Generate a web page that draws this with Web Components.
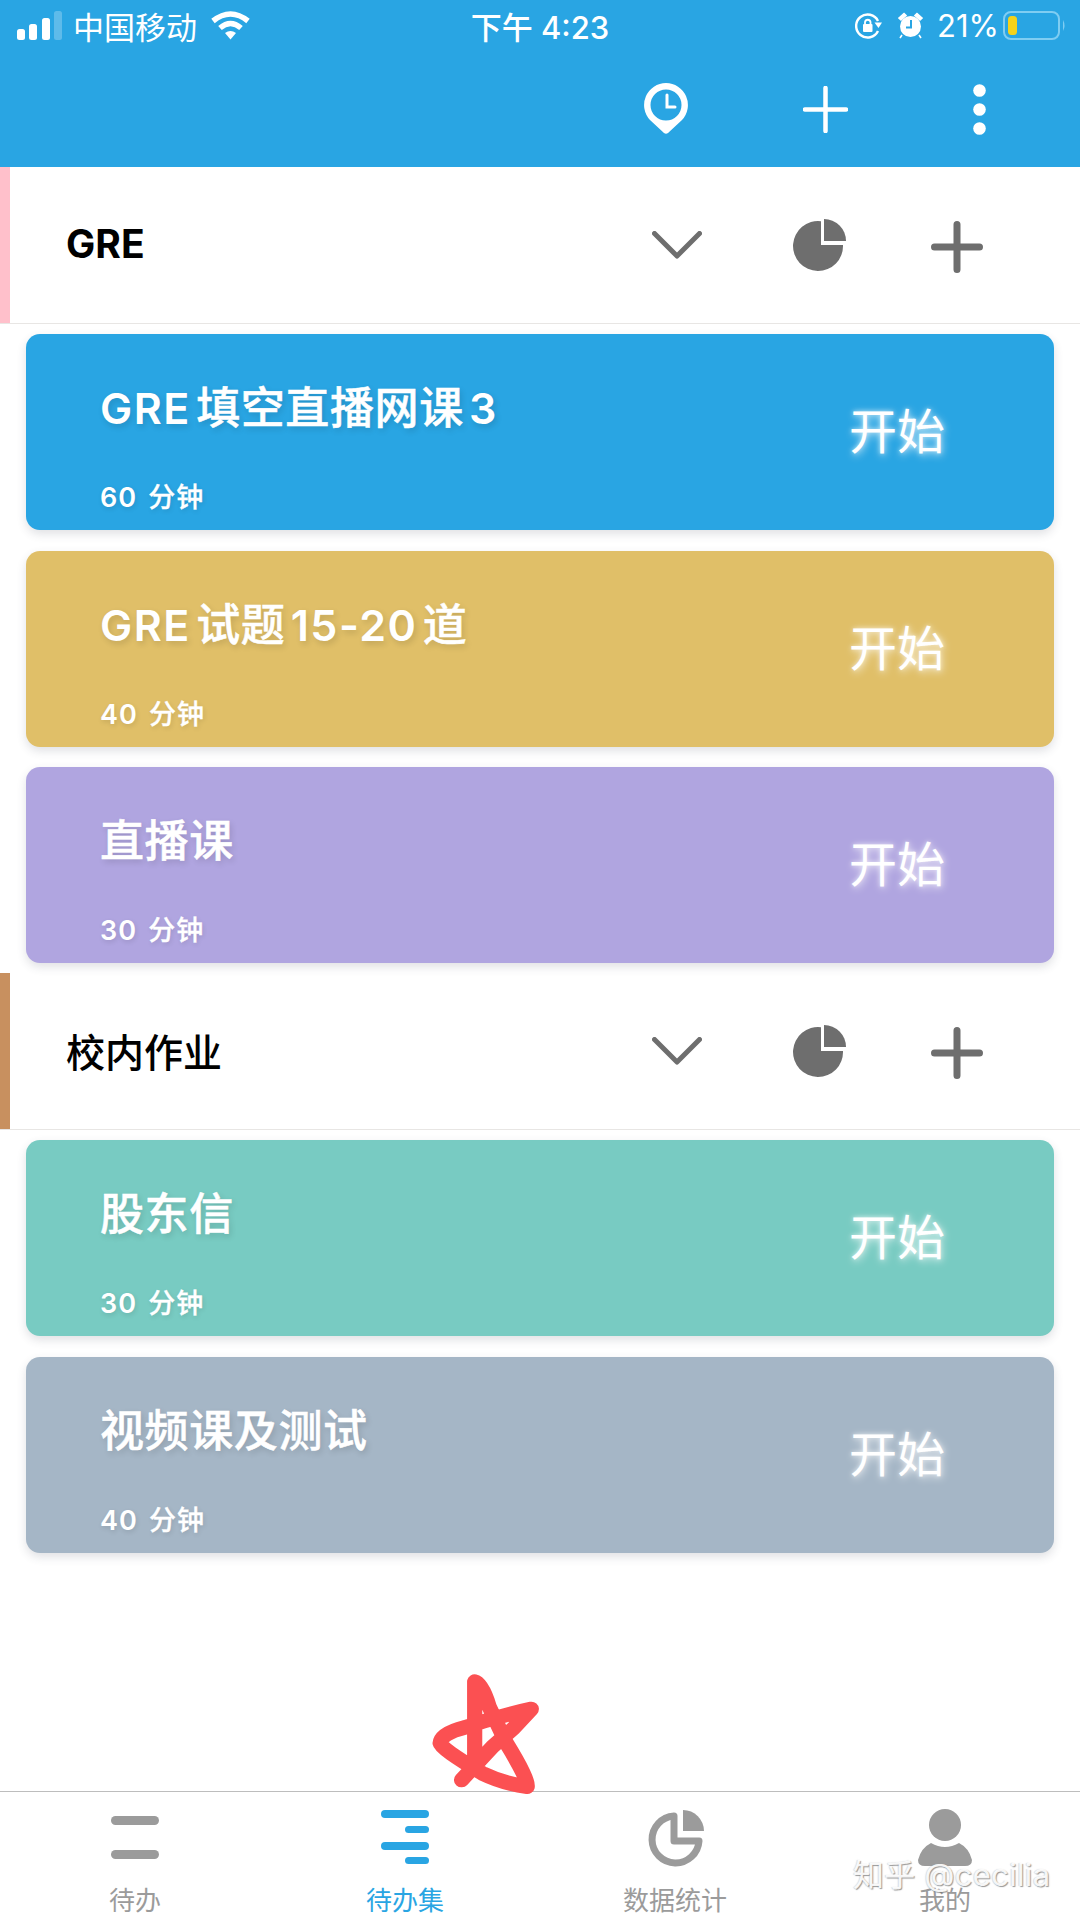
<!DOCTYPE html>
<html lang="zh-CN">
<head>
<meta charset="utf-8">
<title>待办集</title>
<style>
  html, body { margin: 0; padding: 0; background: #fff; }
  body { font-family: Inter, "Noto Sans CJK SC", sans-serif; }
</style>
</head>
<body>
<todo-screen>
  <app-header></app-header>
  <todo-group name="GRE" color="#ffc0cb">
    <todo-card name="GRE 填空直播网课 3" minutes="60 分钟" color="#29a5e3"></todo-card>
    <todo-card name="GRE 试题 15-20 道" minutes="40 分钟" color="#e0bf68"></todo-card>
    <todo-card name="直播课" minutes="30 分钟" color="#b0a5e0"></todo-card>
  </todo-group>
  <todo-group name="校内作业" color="#c8905f">
    <todo-card name="股东信" minutes="30 分钟" color="#78cbc2"></todo-card>
    <todo-card name="视频课及测试" minutes="40 分钟" color="#a5b6c6"></todo-card>
  </todo-group>
  <tab-bar slot="tabs">
    <tab-item icon="todo" label="待办"></tab-item>
    <tab-item icon="set" label="待办集" active></tab-item>
    <tab-item icon="stats" label="数据统计"></tab-item>
    <tab-item icon="me" label="我的"></tab-item>
  </tab-bar>
</todo-screen>

<script>
const BLUE = '#29a5e3'

// latin runs are heavier than the chinese ones in the reference
const boldLatin = text => text.replace(/[\x21-\x7e]+/g, run => `<b>${run}</b>`)

const ICONS = {
  signal: `<svg width="45" height="29" viewBox="0 0 45 29" fill="#fff">
      <rect x="0" y="18" width="8" height="11" rx="2.5"/>
      <rect x="12" y="13" width="8" height="16" rx="2.5"/>
      <rect x="25" y="7" width="8" height="22" rx="2.5"/>
      <rect x="37" y="0" width="8" height="29" rx="2.5" opacity=".25"/>
    </svg>`,
  wifi: `<svg width="39" height="29" viewBox="0 0 39 29" fill="none" stroke="#fff" stroke-width="5.5">
      <path d="M2 10 Q19.5 -4 37 10"/>
      <path d="M9 17 Q19.5 8 30 17"/>
      <path d="M14 22 Q19.5 18 25 22 L19.5 28.5 Z" fill="#fff" stroke="none"/>
    </svg>`,
  rotate: `<svg width="27" height="26" viewBox="0 0 27 26" fill="none" stroke="#fff" stroke-width="2.4">
      <path d="M23 18 A11.5 11.5 0 1 1 23 8"/>
      <path d="M19.5 9.5 L27 9.5 L23.5 15 Z" fill="#fff" stroke="none"/>
      <rect x="8" y="11" width="9.5" height="8" rx="1" fill="#fff" stroke="none"/>
      <path d="M10 11 V9 A2.8 2.8 0 0 1 15.5 9 V11" stroke-width="1.8"/>
    </svg>`,
  alarm: `<svg width="25" height="27" viewBox="0 0 25 27" fill="#fff">
      <circle cx="12.5" cy="14.5" r="10.5"/>
      <path d="M1 6 L6 1.5 L8 3.5 L3 8 Z M24 6 L19 1.5 L17 3.5 L22 8 Z M4 23 L2 26 M21 23 L23 26" stroke="#fff" stroke-width="1.6"/>
      <path d="M13 8 V15.5 H8" fill="none" stroke="${BLUE}" stroke-width="2"/>
    </svg>`,
  battery: `<svg width="63" height="29" viewBox="0 0 63 29">
      <rect x="1" y="1" width="55" height="27" rx="7" fill="none" stroke="#7fcdf2" stroke-width="2"/>
      <rect x="5" y="5" width="9" height="19" rx="3.5" fill="#f5d21a"/>
      <path d="M60 9 Q63 14.5 60 20 Z" fill="#7fcdf2"/>
    </svg>`,
  pin: `<svg width="44" height="51" viewBox="0 0 44 51">
      <path fill="#fff" fill-rule="evenodd" d="M22 0 A22 22 0 0 1 38 37 L24 50 Q22 51.5 20 50 L6 37 A22 22 0 0 1 22 0 Z M22 6.5 A15.5 15.5 0 1 0 22 37.5 A15.5 15.5 0 1 0 22 6.5 Z"/>
      <path fill="none" stroke="#fff" stroke-width="3" stroke-linecap="round" d="M23 12 V24 H31"/>
    </svg>`,
  plusLight: `<svg width="45" height="47" viewBox="0 0 45 47" stroke="#fff" stroke-width="4.5" stroke-linecap="round">
      <path d="M22.5 2 V45 M2 23.5 H43"/>
    </svg>`,
  dots: `<svg width="13" height="51" viewBox="0 0 13 51" fill="#fff">
      <circle cx="6.5" cy="6.5" r="6.3"/><circle cx="6.5" cy="25.5" r="6.3"/><circle cx="6.5" cy="44.5" r="6.3"/>
    </svg>`,
  chevron: `<svg width="50" height="28" viewBox="0 0 50 28" fill="none" stroke="#6e6e6e" stroke-width="5" stroke-linecap="round" stroke-linejoin="round">
      <path d="M2.5 2.5 L25 25 L47.5 2.5"/>
    </svg>`,
  pie: `<svg width="53" height="53" viewBox="0 0 53 53" fill="#6e6e6e">
      <path d="M28 2.2 V26 H50 A25 25 0 1 1 28 2.2 Z"/>
      <path d="M31 0 A22 22 0 0 1 53 22 H31 Z"/>
    </svg>`,
  plusDark: `<svg width="52" height="52" viewBox="0 0 52 52" stroke="#6e6e6e" stroke-width="7" stroke-linecap="round">
      <path d="M26 3.5 V48.5 M3.5 26 H48.5"/>
    </svg>`,
  todo: `<svg width="48" height="60" viewBox="0 0 48 60" fill="currentColor">
      <rect y="8" width="48" height="9" rx="4.5"/><rect y="42" width="48" height="9" rx="4.5"/>
    </svg>`,
  set: `<svg width="48" height="60" viewBox="0 0 48 60" fill="currentColor">
      <rect y="2" width="48" height="8" rx="4"/><rect x="24" y="18" width="24" height="7" rx="3.5"/>
      <rect y="34" width="48" height="8" rx="4"/><rect x="24" y="49" width="24" height="7" rx="3.5"/>
    </svg>`,
  stats: `<svg width="57" height="60" viewBox="0 0 57 60" fill="none" stroke="currentColor" stroke-width="7" stroke-linejoin="round">
      <path d="M27 8 A23.5 23.5 0 1 0 52 33 H27 Z"/>
      <path d="M36 2 A21 21 0 0 1 57 23 H36 Z" fill="currentColor" stroke="none"/>
    </svg>`,
  me: `<svg width="54" height="60" viewBox="0 0 54 60" fill="currentColor">
      <circle cx="27" cy="17" r="16"/>
      <path d="M13 35 Q27 43 41 35 Q51 40 54 52 Q54 58 47 58 H7 Q0 58 0 52 Q3 40 13 35 Z"/>
    </svg>`
}

class TodoScreen extends HTMLElement {
  connectedCallback () {
    this.attachShadow({ mode: 'open' })
    this.shadowRoot.innerHTML = `
      <style>
        :host { display: flex; flex-direction: column; position: relative; width: 1080px; height: 1920px; overflow: hidden; background: #fff; }
        .main { flex: 1; display: block; }
        .star { position: absolute; left: 427px; top: 1670px; }
        .mark {
          position: absolute; left: 853px; top: 1855px;
          font-size: 31px; line-height: 40px; letter-spacing: .3px; white-space: nowrap;
          color: rgba(255,255,255,.92);
          text-shadow: 1px 1px 1px rgba(110,110,110,.7), -1px 0 1px rgba(170,170,170,.4);
        }
      </style>
      <div class="main"><slot></slot></div>
      <slot name="tabs"></slot>
      <svg class="star" width="114" height="130" viewBox="1240 90 330 390" preserveAspectRatio="none" fill="none" stroke="#fb5052" stroke-width="44" stroke-linecap="round" stroke-linejoin="round">
        <path d="M1340 420 L1430 320 L1490 265 L1542 207 Q1440 230 1350 262 Q1280 280 1278 310 Q1280 325 1400 400 Q1460 430 1530 440 Q1535 420 1470 310 L1420 200 Q1400 130 1378 125 L1378 350"/>
      </svg>
      <div class="mark">知乎 @cecilia</div>
    `
  }
}

class AppHeader extends HTMLElement {
  connectedCallback () {
    this.attachShadow({ mode: 'open' })
    this.shadowRoot.innerHTML = `
      <style>
        :host { display: block; height: 167px; background: ${BLUE}; color: #fff; font-size: 31px; }
        .status { display: grid; grid-template-columns: 1fr auto 1fr; align-items: center; height: 51px; }
        .left, .right { display: flex; align-items: center; }
        .left { padding-left: 17px; }
        .left span { margin: 0 14px 0 11px; }
        .right { justify-content: flex-end; padding-right: 14px; }
        .right svg { display: block; }
        .alarm { margin: 0 14px 0 16px; }
        .pct { margin-right: 4px; }
        .time { font-weight: 500; }
        .tools { display: flex; justify-content: flex-end; align-items: center; height: 116px; padding-right: 94px; }
        .tools > * { display: block; }
        .tools svg:nth-child(1) { margin-right: 115px; margin-top: -2px; }
        .tools svg:nth-child(2) { margin-right: 125px; }
      </style>
      <div class="status">
        <div class="left">${ICONS.signal}<span>中国移动</span>${ICONS.wifi}</div>
        <div class="time">下午 4:23</div>
        <div class="right">${ICONS.rotate}<div class="alarm">${ICONS.alarm}</div><div class="pct">21%</div>${ICONS.battery}</div>
      </div>
      <div class="tools">${ICONS.pin}${ICONS.plusLight}${ICONS.dots}</div>
    `
  }
}

class TodoGroup extends HTMLElement {
  connectedCallback () {
    this.attachShadow({ mode: 'open' })
    this.shadowRoot.innerHTML = `
      <style>
        :host { display: block; }
        .head { display: flex; align-items: center; box-sizing: border-box; height: 157px; border-bottom: 1px solid #e8e6e4; background: #fff; padding-right: 97px; }
        .bar { align-self: stretch; width: 10px; background: ${this.getAttribute('color')}; }
        .name { flex: 1; margin-left: 56px; padding-bottom: 3px; font-size: 39px; font-weight: 500; color: #000; }
        .name b { font-weight: 700; }
        .chev { margin-right: 91px; }
        .pie { margin-right: 85px; }
        .head svg { display: block; }
        .plus { margin-top: 3px; }
        .list { display: flex; flex-direction: column; gap: 20.5px; padding: 10px 26px; }
      </style>
      <div class="head">
        <div class="bar"></div>
        <div class="name">${boldLatin(this.getAttribute('name'))}</div>
        <div class="chev">${ICONS.chevron}</div>
        <div class="pie">${ICONS.pie}</div>
        <div class="plus">${ICONS.plusDark}</div>
      </div>
      <div class="list"><slot></slot></div>
    `
  }
}

class TodoCard extends HTMLElement {
  connectedCallback () {
    this.attachShadow({ mode: 'open' })
    this.shadowRoot.innerHTML = `
      <style>
        :host {
          display: flex; justify-content: space-between; align-items: center;
          box-sizing: border-box; height: 196px; padding: 0 109px 0 74px;
          border-radius: 14px; color: #fff; background: ${this.getAttribute('color')};
          box-shadow: 0 4px 10px rgba(60,70,90,.16);
        }
        .text { align-self: flex-start; padding-top: 49px; }
        .name { font-size: 44px; line-height: 50px; font-weight: 500; letter-spacing: .6px; word-spacing: -7px; white-space: nowrap; -webkit-text-stroke: .5px #fff; text-shadow: 2px 3px 6px rgba(0,0,0,.14); }
        .name b { font-size: 43px; font-weight: 600; letter-spacing: 1.5px; -webkit-text-stroke: 0; }
        .minutes { margin-top: 47px; font-size: 27px; line-height: 36px; font-weight: 500; letter-spacing: 1px; word-spacing: 3px; -webkit-text-stroke: .3px #fff; text-shadow: 1px 2px 5px rgba(0,0,0,.12); }
        .minutes b { font-size: 27px; font-weight: 600; -webkit-text-stroke: 0; }
        .start { font-size: 48px; line-height: 60px; text-shadow: 1px 2px 8px rgba(255,255,255,.75), 0 0 4px rgba(255,255,255,.5); }
      </style>
      <div class="text">
        <div class="name">${boldLatin(this.getAttribute('name'))}</div>
        <div class="minutes">${boldLatin(this.getAttribute('minutes'))}</div>
      </div>
      <div class="start">开始</div>
    `
  }
}

class TabBar extends HTMLElement {
  connectedCallback () {
    this.attachShadow({ mode: 'open' })
    this.shadowRoot.innerHTML = `
      <style>
        :host { display: grid; grid-template-columns: repeat(4, 1fr); box-sizing: border-box; height: 129px; border-top: 1.5px solid #bdbdbd; background: #fff; }
      </style>
      <slot></slot>
    `
  }
}

class TabItem extends HTMLElement {
  connectedCallback () {
    this.attachShadow({ mode: 'open' })
    const active = this.hasAttribute('active')
    this.shadowRoot.innerHTML = `
      <style>
        :host { display: flex; flex-direction: column; align-items: center; padding-top: 16px; color: ${active ? BLUE : '#9b9b9b'}; }
        svg { display: block; }
        .label { margin-top: 18px; font-size: 26px; line-height: 30px; white-space: nowrap; }
      </style>
      ${ICONS[this.getAttribute('icon')]}
      <div class="label">${this.getAttribute('label')}</div>
    `
  }
}

window.customElements.define('todo-screen', TodoScreen)
window.customElements.define('app-header', AppHeader)
window.customElements.define('todo-group', TodoGroup)
window.customElements.define('todo-card', TodoCard)
window.customElements.define('tab-bar', TabBar)
window.customElements.define('tab-item', TabItem)
</script>
</body>
</html>
